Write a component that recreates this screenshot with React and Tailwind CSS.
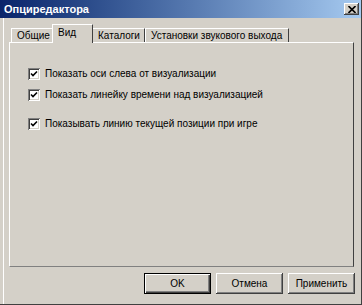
import { useState } from "react";

const FONT = { fontFamily: '"Liberation Sans", Arial, sans-serif' };

const OPTIONS = [
  { id: "axes", label: "Показать оси слева от визуализации", gap: "mt-0" },
  { id: "ruler", label: "Показать линейку времени над визуализацией", gap: "mt-[9px]" },
  { id: "cursor", label: "Показывать линию текущей позиции при игре", gap: "mt-[17px]" },
];

function Checkbox({ checked, onChange }) {
  return (
    <button
      onClick={onChange}
      className="w-[12px] h-[12px] shrink-0 bg-white flex items-center justify-center shadow-[inset_1px_1px_#808080,inset_-1px_-1px_#ffffff,inset_2px_2px_#404040,inset_-2px_-2px_#d4d0c8]"
    >
      {checked && (
        <svg width="8" height="8" viewBox="0 0 8 8">
          <path d="M1 3.5 L3 5.5 L7 1.5" stroke="#000" strokeWidth="1.6" fill="none" />
        </svg>
      )}
    </button>
  );
}

function Tab({ label, active, onClick, width }) {
  if (active) {
    return (
      <button
        onClick={onClick}
        className={`${width} h-[19px] -mb-[1px] -mx-[1px] relative z-10 bg-[#d4d0c8] border-t border-l border-white border-r border-r-[#404040] text-left pl-[5px] pb-[3px] text-[10px] whitespace-nowrap text-black`}
      >
        {label}
      </button>
    );
  }
  return (
    <button
      onClick={onClick}
      className={`${width} h-[14px] bg-[#d4d0c8] border-t border-l border-white border-r border-r-[#404040] text-left pl-[5px] text-[10px] leading-[13px] whitespace-nowrap overflow-hidden text-black`}
    >
      {label}
    </button>
  );
}

function WinButton({ children, primary }) {
  return (
    <button
      className={`w-[67px] h-[21px] bg-[#d4d0c8] text-[10px] text-black ${
        primary
          ? "shadow-[inset_-1px_-1px_#000000,inset_1px_1px_#000000,inset_2px_2px_#ffffff,inset_-2px_-2px_#404040,inset_-3px_-3px_#808080]"
          : "shadow-[inset_-1px_-1px_#404040,inset_1px_1px_#ffffff,inset_-2px_-2px_#808080]"
      }`}
    >
      {children}
    </button>
  );
}

export default function App() {
  const [tab, setTab] = useState("view");
  const [checks, setChecks] = useState({ axes: true, ruler: true, cursor: true });

  return (
    <div style={FONT} className="w-[362px] h-[305px] bg-[#d4d0c8] flex flex-col border-r border-b border-[#404040] overflow-hidden">
      <div className="h-[18px] shrink-0 flex items-center bg-linear-to-r from-[#0a246a] to-[#a6caf0] pl-[4px] pr-[2px]">
        <span className="text-white font-bold text-[11px] leading-none flex-1">Опциредактора</span>
        <button className="w-[15px] h-[12px] bg-[#d4d0c8] flex items-center justify-center shadow-[inset_-1px_-1px_#404040,inset_1px_1px_#ffffff,inset_-2px_-2px_#808080]">
          <svg width="8" height="7" viewBox="0 0 8 7">
            <path d="M0.5 0 L7.5 7 M7.5 0 L0.5 7" stroke="#000" strokeWidth="1.6" />
          </svg>
        </button>
      </div>

      <div className="flex-1 flex flex-col border-l border-white ml-[3px] pl-[5px] pr-[7px]">
        <div className="flex items-end pl-[2px] mt-[7px] h-[17px]">
          <Tab label="Общие" width="w-[42px]" active={tab === "general"} onClick={() => setTab("general")} />
          <Tab label="Вид" width="w-[41px]" active={tab === "view"} onClick={() => setTab("view")} />
          <Tab label="Каталоги" width="w-[53px]" active={tab === "dirs"} onClick={() => setTab("dirs")} />
          <Tab label="Установки звукового выхода" width="w-[144px]" active={tab === "out"} onClick={() => setTab("out")} />
        </div>

        <div className="h-[225px] border-t border-l border-white border-r border-r-[#404040] border-b border-b-[#808080] flex flex-col pl-[18px] pt-[25px]">
          {tab === "view" &&
            OPTIONS.map((o) => (
              <div key={o.id} className={`flex items-center gap-[5px] h-[12px] ${o.gap}`}>
                <Checkbox
                  checked={checks[o.id]}
                  onChange={() => setChecks({ ...checks, [o.id]: !checks[o.id] })}
                />
                <span className="text-[10px] text-black leading-none whitespace-nowrap">{o.label}</span>
              </div>
            ))}
        </div>

        <div className="flex justify-end gap-[5px] mt-[6px] -mr-[1px]">
          <WinButton primary>OK</WinButton>
          <WinButton>Отмена</WinButton>
          <WinButton>Применить</WinButton>
        </div>
      </div>
    </div>
  );
}
